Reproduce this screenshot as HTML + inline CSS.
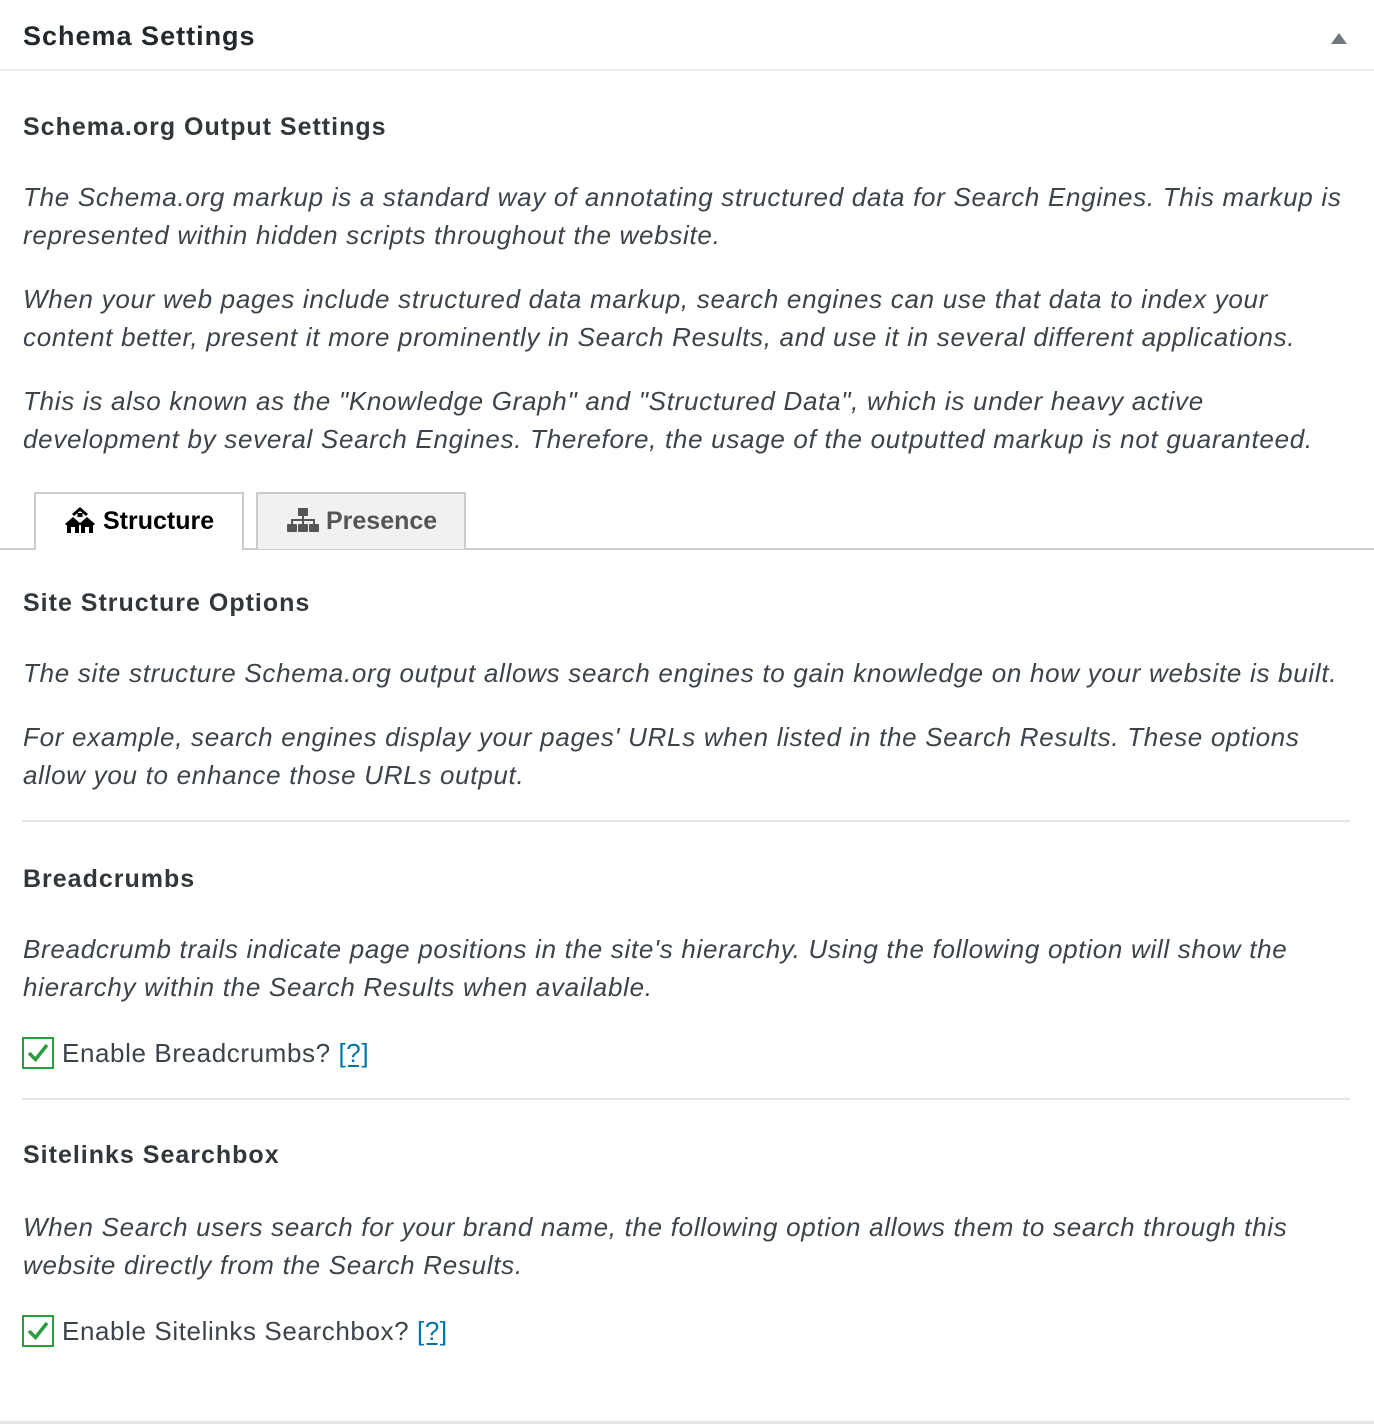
<!DOCTYPE html>
<html><head><meta charset="utf-8">
<style>
html,body{margin:0;padding:0;background:#fff;width:1374px;height:1424px;overflow:hidden;position:relative;font-family:"Liberation Sans",sans-serif;color:#3c434a}
.a{position:absolute;white-space:nowrap;line-height:38px}
.h{font-weight:bold;font-size:25px;color:#32373c;letter-spacing:1px}
.p{font-style:italic;font-size:26px;left:23px;letter-spacing:0.7px}
.hr{position:absolute;left:22px;width:1328px;height:2px;background:#e2e4e7}
.cb{position:absolute;left:22px;width:32px;height:32px;border:2px solid #2a9d3f;box-sizing:border-box;background:#fff}
.cb svg{position:absolute;left:3px;top:3px}
.lbl{font-size:26px;left:62px;letter-spacing:0.6px}
a{color:#0073aa;text-decoration:underline;text-underline-offset:3px}
</style></head><body>
<div class="a h" style="left:23px;top:17px;font-size:27px;color:#23282d">Schema Settings</div>
<div style="position:absolute;left:1331px;top:33px;width:0;height:0;border-left:8px solid transparent;border-right:8px solid transparent;border-bottom:11px solid #72777c"></div>
<div style="position:absolute;left:0;top:69px;width:1374px;height:2px;background:#eee"></div>

<div class="a h" style="left:23px;top:108px">Schema.org Output Settings</div>
<div class="a p" style="top:178px">The Schema.org markup is a standard way of annotating structured data for Search Engines. This markup is</div>
<div class="a p" style="top:216px">represented within hidden scripts throughout the website.</div>
<div class="a p" style="top:280px">When your web pages include structured data markup, search engines can use that data to index your</div>
<div class="a p" style="top:318px">content better, present it more prominently in Search Results, and use it in several different applications.</div>
<div class="a p" style="top:382px">This is also known as the "Knowledge Graph" and "Structured Data", which is under heavy active</div>
<div class="a p" style="top:420px">development by several Search Engines. Therefore, the usage of the outputted markup is not guaranteed.</div>

<div style="position:absolute;left:0;top:548px;width:1374px;height:2px;background:#ccc"></div>
<div style="position:absolute;left:34px;top:492px;width:210px;height:58px;box-sizing:border-box;border:2px solid #ccc;border-bottom:none;background:#fff"></div>
<div style="position:absolute;left:256px;top:492px;width:210px;height:57px;box-sizing:border-box;border:2px solid #ccc;border-bottom:none;background:#f1f1f1"></div>
<svg style="position:absolute;left:64px;top:506px" width="32" height="28" viewBox="0 0 32 28">
<path d="M16 1 L8 8 L10 10 L16 5 L22 10 L24 8 Z" fill="#000"/>
<rect x="13.5" y="7" width="5" height="4" fill="#000"/>
<path d="M9 11 L1 18 L3 19.5 L3 27 L15 27 L15 19.5 L17 18 Z M23 11 L15 18 L17 19.5 L17 27 L29 27 L29 19.5 L31 18 Z" fill="#000"/>
<rect x="7" y="21" width="4" height="6" fill="#fff"/><rect x="21" y="21" width="4" height="6" fill="#fff"/>
</svg>
<div class="a" style="left:103px;top:502px;font-size:25px;font-weight:bold;color:#000">Structure</div>
<svg style="position:absolute;left:287px;top:508px" width="32" height="25" viewBox="0 0 32 25">
<g fill="#555"><rect x="11" y="0" width="10" height="8" rx="1"/><rect x="15" y="8" width="2" height="5"/><rect x="4" y="11" width="24" height="2"/><rect x="4" y="11" width="2" height="5"/><rect x="15" y="11" width="2" height="5"/><rect x="26" y="11" width="2" height="5"/>
<rect x="0" y="16" width="10" height="8" rx="1"/><rect x="11" y="16" width="10" height="8" rx="1"/><rect x="22" y="16" width="10" height="8" rx="1"/></g>
</svg>
<div class="a" style="left:326px;top:502px;font-size:25px;font-weight:bold;color:#555">Presence</div>

<div class="a h" style="left:23px;top:584px">Site Structure Options</div>
<div class="a p" style="top:654px">The site structure Schema.org output allows search engines to gain knowledge on how your website is built.</div>
<div class="a p" style="top:718px">For example, search engines display your pages' URLs when listed in the Search Results. These options</div>
<div class="a p" style="top:756px">allow you to enhance those URLs output.</div>
<div class="hr" style="top:820px"></div>

<div class="a h" style="left:23px;top:860px">Breadcrumbs</div>
<div class="a p" style="top:930px">Breadcrumb trails indicate page positions in the site's hierarchy. Using the following option will show the</div>
<div class="a p" style="top:968px">hierarchy within the Search Results when available.</div>
<div class="cb" style="top:1037px"><svg width="22" height="22" viewBox="0 0 22 22"><path d="M2 11 L8.5 17.5 L20 3" stroke="#2a9d3f" stroke-width="3.5" fill="none"/></svg></div>
<div class="a lbl" style="top:1034px">Enable Breadcrumbs? <a>[?]</a></div>
<div class="hr" style="top:1098px"></div>

<div class="a h" style="left:23px;top:1136px">Sitelinks Searchbox</div>
<div class="a p" style="top:1208px">When Search users search for your brand name, the following option allows them to search through this</div>
<div class="a p" style="top:1246px">website directly from the Search Results.</div>
<div class="cb" style="top:1315px"><svg width="22" height="22" viewBox="0 0 22 22"><path d="M2 11 L8.5 17.5 L20 3" stroke="#2a9d3f" stroke-width="3.5" fill="none"/></svg></div>
<div class="a lbl" style="top:1312px">Enable Sitelinks Searchbox? <a>[?]</a></div>

<div style="position:absolute;left:0;top:1421px;width:1374px;height:3px;background:#e5e5e5"></div>
</body></html>
